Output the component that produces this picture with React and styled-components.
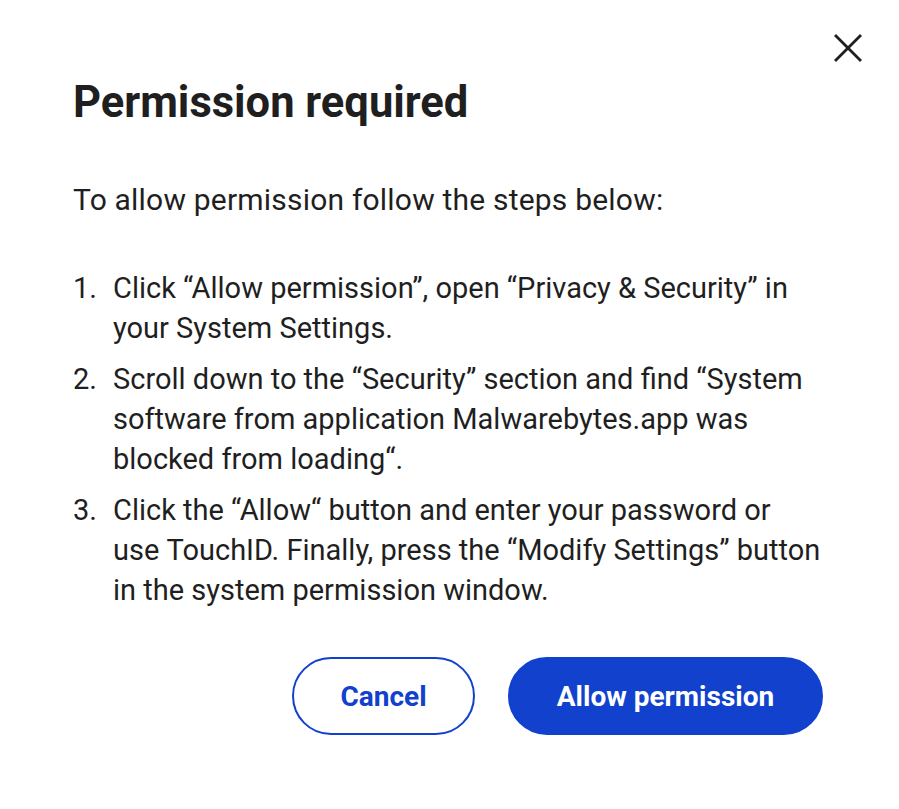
import React from "react";
import styled, { createGlobalStyle } from "styled-components";

const steps = [
  "Click “Allow permission”, open “Privacy & Security” in your System Settings.",
  "Scroll down to the “Security” section and find “System software from application Malwarebytes.app was blocked from loading“.",
  "Click the “Allow“ button and enter your password or use\u00A0TouchID. Finally, press the “Modify Settings” button in the system permission window.",
];

function App() {
  return (
    <>
      <GlobalStyle />
      <Dialog>
        <TopBar>
          <CloseButton aria-label="Close">
            <svg width="28" height="28" viewBox="0 0 28 28">
              <path d="M2 2 L26 26 M26 2 L2 26" stroke="#1f1f1f" strokeWidth="2.8" strokeLinecap="square" />
            </svg>
          </CloseButton>
        </TopBar>
        <Title>Permission required</Title>
        <Intro>To allow permission follow the steps below:</Intro>
        <Steps>
          {steps.map((s, idx) => (
            <Step key={`step_${idx}`}>
              <Num>{idx + 1}.</Num>
              <StepText>{s}</StepText>
            </Step>
          ))}
        </Steps>
        <Actions>
          <Button>Cancel</Button>
          <Button primary>Allow permission</Button>
        </Actions>
      </Dialog>
    </>
  );
}

const GlobalStyle = createGlobalStyle`
body {
  margin: 0;
  background: #fff;
  font-family: Roboto, "Liberation Sans", sans-serif;
  color: #1f1f1f;
}
`;

const Dialog = styled.div`
width: 899px;
height: 809px;
box-sizing: border-box;
padding: 35px 38px 0 73px;
display: flex;
flex-direction: column;
`;

const TopBar = styled.div`
display: flex;
justify-content: flex-end;
height: 26px;
`;

const CloseButton = styled.button`
border: none;
background: transparent;
padding: 0;
margin: -1px -1px 0 0;
width: 28px;
height: 28px;
cursor: pointer;
`;

const Title = styled.h1`
font-size: 43.5px;
font-weight: 700;
margin: 16px 0 0 0;
line-height: 52px;
`;

const Intro = styled.p`
font-size: 30px;
letter-spacing: 0.2px;
line-height: 40px;
margin: 51px 0 0 0;
`;

const Steps = styled.ol`
list-style: none;
margin: 48px 0 0 0;
padding: 0;
display: flex;
flex-direction: column;
gap: 11px;
`;

const Step = styled.li`
display: flex;
font-size: 29px;
line-height: 40px;
`;

const Num = styled.span`
width: 40px;
flex-shrink: 0;
`;

const StepText = styled.span`
width: 720px;
`;

const Actions = styled.div`
display: flex;
justify-content: flex-end;
gap: 33px;
margin-top: 47px;
padding-right: 38px;
`;

const Button = styled.button`
height: 78px;
min-width: ${(p) => (p.primary ? "315px" : "183px")};
border-radius: 39px;
border: 2px solid #1141cd;
background: ${(p) => (p.primary ? "#1141cd" : "#fff")};
color: ${(p) => (p.primary ? "#fff" : "#1141cd")};
font-family: Roboto, "Liberation Sans", sans-serif;
font-size: 28px;
font-weight: 700;
cursor: pointer;
`;

export default App;
